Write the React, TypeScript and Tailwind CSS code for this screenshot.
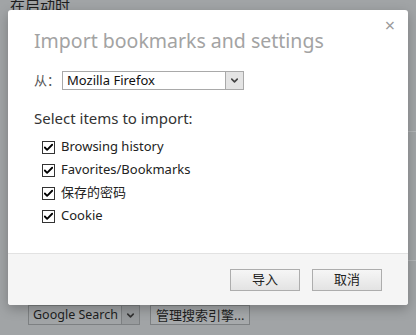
import { Check, ChevronDown } from 'lucide-react';

const items = ['Browsing history', 'Favorites/Bookmarks', '保存的密码', 'Cookie'];

function CheckRow({ label }: { label: string }) {
  return (
    <div className="flex h-[23px] items-center gap-[6px]">
      <span className="flex h-[13px] w-[13px] items-center justify-center border border-[#333] bg-white">
        <Check className="h-[11px] w-[11px] text-black" strokeWidth={4} />
      </span>
      <span className="whitespace-nowrap text-[13px] text-[#222]">{label}</span>
    </div>
  );
}

export default function App() {
  return (
    <div
      className="relative h-[335px] w-[416px] overflow-hidden bg-[#a1a4a6]"
      style={{ fontFamily: '"Noto Sans", "Noto Sans CJK SC", sans-serif' }}
    >
      {/* page under the overlay */}
      <div className="flex h-full flex-col">
        <div className="-mt-[5px] pl-[10px] text-[15px] leading-[20px] text-[#1e1e1e]">在启动时</div>
        <div className="mt-[116px] ml-[408px] h-px bg-[#b3b6b8]" />
        <div className="mt-[128px] ml-[408px] h-px bg-[#b3b6b8]" />
        <div className="mt-auto mb-[10px] flex items-center gap-[10px] pl-[28px]">
          <div className="flex h-[20px] w-[112px] border border-[#7d8082]">
            <span className="flex-1 whitespace-nowrap pl-[4px] text-[12.5px] leading-[18px] text-[#1e1e1e]">Google Search</span>
            <span className="flex w-[18px] items-center justify-center border-l border-[#7d8082] bg-[#979a9c]">
              <ChevronDown className="h-[11px] w-[11px] text-[#333]" strokeWidth={3.5} />
            </span>
          </div>
          <div className="h-[20px] whitespace-nowrap border border-[#7d8082] bg-[#a6a9ab] px-[5px] text-[13px] leading-[18px] text-[#1e1e1e]">
            管理搜索引擎...
          </div>
        </div>
      </div>

      {/* dialog */}
      <div className="absolute left-[8px] top-[10px] flex h-[295px] w-[400px] flex-col overflow-hidden rounded-[3px] bg-white shadow-[0_4px_12px_rgba(0,0,0,0.25)]">
        <div className="relative flex-1 px-[26px] pt-[17px]">
          <span className="absolute right-[13px] top-[6px] text-[18px] leading-[18px] text-[#9a9a9a]">×</span>
          <div className="whitespace-nowrap text-[19.5px] leading-[28px] text-[#a3a3a3]">Import bookmarks and settings</div>
          <div className="mt-[16px] flex items-center gap-[2px]">
            <span className="text-[13px] text-[#555]">从：</span>
            <div className="flex h-[19px] w-[182px] border border-[#a9a9a9]">
              <span className="flex-1 pl-[4px] text-[13px] leading-[17px] text-[#111]">Mozilla Firefox</span>
              <span className="flex w-[18px] items-center justify-center border-l border-[#a9a9a9] bg-[#e4e4e4]">
                <ChevronDown className="h-[11px] w-[11px] text-[#444]" strokeWidth={3.5} />
              </span>
            </div>
          </div>
          <div className="mt-[17px] text-[15px] leading-[20px] text-[#333]">Select items to import:</div>
          <div className="mt-[8px] flex flex-col pl-[8px]">
            {items.map((it) => (
              <CheckRow key={it} label={it} />
            ))}
          </div>
        </div>
        <div className="flex h-[52px] items-center justify-end gap-[12px] border-t border-[#e2e2e2] bg-[#f5f5f5] pr-[26px]">
          <button className="h-[22px] w-[70px] border border-[#adadad] bg-gradient-to-b from-[#f6f6f6] to-[#e3e3e3] text-[13px] text-[#222]">导入</button>
          <button className="h-[22px] w-[70px] border border-[#adadad] bg-gradient-to-b from-[#f6f6f6] to-[#e3e3e3] text-[13px] text-[#222]">取消</button>
        </div>
      </div>
    </div>
  );
}
